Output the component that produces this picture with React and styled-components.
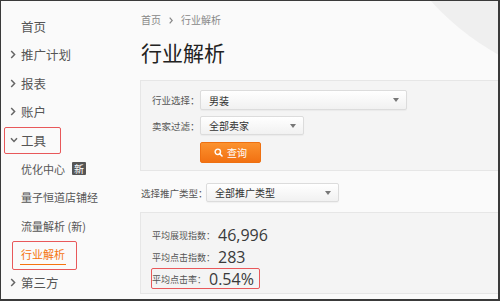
import React from "react";
import styled, { createGlobalStyle, css } from "styled-components";

const GlobalStyle = createGlobalStyle`
  html, body {
    margin: 0;
    padding: 0;
    background: #fafafa;
  }
  body {
    font-family: "Noto Sans CJK SC", "Noto Sans", sans-serif;
  }
`;

const Frame = styled.div`
  position: relative;
  width: 500px;
  height: 301px;
  box-sizing: border-box;
  border-style: solid;
  border-color: #3a3a3a;
  border-width: 1px 2px 2px 1px;
  background: #fafafa;
  overflow: hidden;
  display: flex;
`;

const Corner = styled.div`
  position: absolute;
  left: 365px;
  top: -425px;
  width: 510px;
  height: 510px;
  border-radius: 50%;
  background: #efefef;
`;

const redBox = css`
  position: relative;
  &::after {
    content: "";
    position: absolute;
    border: 1.5px solid #e8585a;
    border-radius: 2px;
    pointer-events: none;
  }
`;

const Sidebar = styled.nav`
  position: relative;
  width: 139px;
  flex-shrink: 0;
  padding-top: 11px;
  box-sizing: border-box;
`;

const Item = styled.div`
  display: flex;
  align-items: center;
  height: 28.5px;
  font-size: ${(p) => (p.$sub ? "11px" : "12.5px")};
  color: ${(p) => (p.$active ? "#f5740f" : "#555")};
  ${(p) =>
    p.$boxed &&
    css`
      ${redBox}
      &::after {
        left: 3px;
        top: 1px;
        width: 57px;
        height: 27px;
        box-sizing: border-box;
      }
    `}
  ${(p) =>
    p.$activeBox &&
    css`
      ${redBox}
      &::after {
        left: 11px;
        top: 1px;
        width: 65px;
        height: 29px;
        box-sizing: border-box;
      }
    `}
`;

const Slot = styled.span`
  width: 20px;
  padding-left: 9px;
  box-sizing: border-box;
  display: flex;
  align-items: center;
`;

const Underlined = styled.span`
  position: relative;
  &::after {
    content: "";
    position: absolute;
    left: -1px;
    right: -1px;
    bottom: -3px;
    height: 1.5px;
    background: #f5740f;
  }
`;

const Badge = styled.span`
  margin-left: 7px;
  width: 14px;
  height: 13px;
  background: #555;
  color: #fff;
  font-size: 10px;
  line-height: 13px;
  text-align: center;
  border-radius: 1px;
`;

const Main = styled.main`
  position: relative;
  flex: 1;
  padding-top: 12px;
  min-width: 0;
`;

const Crumbs = styled.div`
  display: flex;
  align-items: center;
  gap: 8px;
  font-size: 10px;
  line-height: 14px;
  color: #888;
  padding-left: 1px;
`;

const Title = styled.h1`
  margin: 11px 0 0;
  padding-left: 1px;
  font-size: 21px;
  line-height: 28px;
  font-weight: 400;
  color: #222;
`;

const Panel = styled.section`
  box-sizing: border-box;
  border: 1px solid #e6e6e6;
  border-right: none;
  background: #f4f4f4;
  margin-top: ${(p) => p.$top}px;
  padding: ${(p) => p.$pad};
`;

const Row = styled.div`
  display: flex;
  align-items: center;
  margin-top: ${(p) => p.$top || 0}px;
`;

const Label = styled.span`
  width: ${(p) => p.$w}px;
  flex-shrink: 0;
  font-size: 9.5px;
  color: #555;
  white-space: nowrap;
`;

const Select = styled.div`
  box-sizing: border-box;
  width: ${(p) => p.$w}px;
  height: ${(p) => p.$h}px;
  display: flex;
  align-items: center;
  justify-content: space-between;
  padding: 0 7px 0 8px;
  border: 1px solid #dcdcdc;
  border-radius: 2px;
  background: linear-gradient(#ffffff, #f1f1f1);
  box-shadow: 0 1px 1px rgba(0, 0, 0, 0.04);
  font-size: 10px;
  color: #333;
`;

const Caret = styled.span`
  width: 0;
  height: 0;
  border-left: 3.5px solid transparent;
  border-right: 3.5px solid transparent;
  border-top: 4px solid #777;
`;

const Button = styled.button`
  margin: 7px 0 0 48px;
  width: 61px;
  height: 21px;
  display: flex;
  align-items: center;
  justify-content: center;
  gap: 4px;
  border: 1px solid #ee7011;
  border-radius: 2px;
  background: linear-gradient(#fb922f, #f27112);
  color: #fff;
  font-family: inherit;
  font-size: 10px;
  padding: 0;
`;

const TypeRow = styled.div`
  display: flex;
  align-items: center;
  margin-top: 12px;
  padding-left: 1px;
`;

const Stat = styled.div`
  display: inline-flex;
  align-items: center;
  gap: 3px;
  height: 22px;
  ${(p) =>
    p.$boxed &&
    css`
      ${redBox}
      &::after {
        left: -1px;
        top: 0;
        width: 109px;
        height: 21px;
        box-sizing: border-box;
      }
    `}
`;

const StatLabel = styled.span`
  font-size: 9px;
  color: #555;
`;

const StatValue = styled.span`
  font-family: "Open Sans", "Noto Sans", sans-serif;
  font-size: 16px;
  color: #3a3a3a;
  line-height: 22px;
`;

const Stack = styled.div`
  display: flex;
  flex-direction: column;
  align-items: flex-start;
`;

const Chevron = ({ down }) =>
  down ? (
    <svg width="8" height="6" viewBox="0 0 8 6">
      <path d="M1 1.2 L4 4.4 L7 1.2" fill="none" stroke="#666" strokeWidth="1.5" />
    </svg>
  ) : (
    <svg width="6" height="9" viewBox="0 0 6 9">
      <path d="M1.2 1 L4.6 4.5 L1.2 8" fill="none" stroke="#666" strokeWidth="1.5" />
    </svg>
  );

const SearchIcon = () => (
  <svg width="9" height="9" viewBox="0 0 9 9">
    <circle cx="3.8" cy="3.8" r="2.7" fill="none" stroke="#fff" strokeWidth="1.4" />
    <path d="M5.8 5.8 L8 8" stroke="#fff" strokeWidth="1.6" strokeLinecap="round" />
  </svg>
);

export default function App() {
  return (
    <>
      <GlobalStyle />
      <Frame>
        <Corner />
        <Sidebar>
          <Item><Slot />首页</Item>
          <Item><Slot><Chevron /></Slot>推广计划</Item>
          <Item><Slot><Chevron /></Slot>报表</Item>
          <Item><Slot><Chevron /></Slot>账户</Item>
          <Item $boxed><Slot><Chevron down /></Slot>工具</Item>
          <Item $sub><Slot />优化中心<Badge>新</Badge></Item>
          <Item $sub><Slot />量子恒道店铺经</Item>
          <Item $sub><Slot />流量解析 (新)</Item>
          <Item $sub $active $activeBox><Slot /><Underlined>行业解析</Underlined></Item>
          <Item><Slot><Chevron /></Slot>第三方</Item>
        </Sidebar>
        <Main>
          <Crumbs>
            <span>首页</span>
            <svg width="4" height="7" viewBox="0 0 4 7">
              <path d="M0.7 0.7 L3.2 3.5 L0.7 6.3" fill="none" stroke="#888" strokeWidth="1.2" />
            </svg>
            <span>行业解析</span>
          </Crumbs>
          <Title>行业解析</Title>
          <Panel $top={14} $pad="9px 0 7px 11px">
            <Row>
              <Label $w={48}>行业选择：</Label>
              <Select $w={207} $h={20}>男装<Caret /></Select>
            </Row>
            <Row $top={6}>
              <Label $w={48}>卖家过滤：</Label>
              <Select $w={104} $h={19}>全部卖家<Caret /></Select>
            </Row>
            <Button>
              <SearchIcon />
              查询
            </Button>
          </Panel>
          <TypeRow>
            <Label $w={65}>选择推广类型：</Label>
            <Select $w={133} $h={19}>全部推广类型<Caret /></Select>
          </TypeRow>
          <Panel $top={10} $pad="11px 0 3px 11px">
            <Stack>
              <Stat>
                <StatLabel>平均展现指数：</StatLabel>
                <StatValue>46,996</StatValue>
              </Stat>
              <Stat>
                <StatLabel>平均点击指数：</StatLabel>
                <StatValue>283</StatValue>
              </Stat>
              <Stat $boxed>
                <StatLabel>平均点击率：</StatLabel>
                <StatValue>0.54%</StatValue>
              </Stat>
            </Stack>
          </Panel>
        </Main>
      </Frame>
    </>
  );
}
